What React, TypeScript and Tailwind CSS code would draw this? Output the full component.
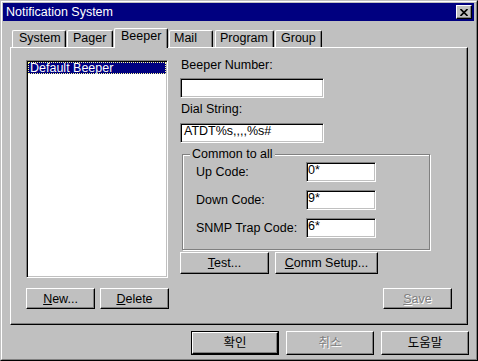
import React from "react";

const raised =
  "border border-t-white border-l-white border-r-black border-b-black shadow-[inset_-1px_-1px_0_#808080]";
const sunken =
  "border border-t-[#808080] border-l-[#808080] border-r-white border-b-white shadow-[inset_1px_1px_0_#000000,inset_-1px_-1px_0_#c0c0c0]";

function Btn({
  w,
  h,
  children,
  disabled,
  def,
}: {
  w: string;
  h: string;
  children: React.ReactNode;
  disabled?: boolean;
  def?: boolean;
}) {
  const inner = (
    <div
      className={`${def ? "w-full h-full" : `${w} ${h}`} ${raised} bg-[#c0c0c0] flex items-center justify-center leading-[14px] ${
        disabled ? "text-[#808080] [text-shadow:1px_1px_0_#ffffff]" : "text-black"
      }`}
    >
      {children}
    </div>
  );
  if (def) {
    return <div className={`${w} ${h} border border-black`}>{inner}</div>;
  }
  return inner;
}

function Tab({
  label,
  cls,
  selected,
}: {
  label: string;
  cls: string;
  selected?: boolean;
}) {
  return (
    <div
      className={`${cls} ${
        selected ? "h-[20px] -mb-px relative z-10" : "h-[17px]"
      } bg-[#c0c0c0] border-t border-l border-r border-t-white border-l-white border-r-black shadow-[inset_-1px_0_0_#808080] rounded-tl-[2px] rounded-tr-[2px] leading-[12px] whitespace-nowrap`}
    >
      {label}
    </div>
  );
}

function Field({ w, text, pl }: { w: string; text?: string; pl: string }) {
  return (
    <div className={`${w} h-[20px] bg-white ${sunken} ${pl} pt-[1px] leading-[12px] whitespace-nowrap`}>
      {text}
    </div>
  );
}

export default function App() {
  return (
    <div className="w-[478px] h-[361px] bg-[#c0c0c0] font-['Liberation_Sans','Noto_Sans_CJK_KR',sans-serif] text-[12.5px] text-black">
      <div className="w-full h-full border border-t-[#c0c0c0] border-l-[#c0c0c0] border-r-black border-b-black">
        <div className="w-full h-full border border-t-white border-l-white border-r-[#808080] border-b-[#808080] pt-px pl-px pr-[2px] flex flex-col">
          {/* Title bar */}
          <div className="h-[18px] bg-[#000080] flex items-center pl-[3px] pr-[2px] shrink-0">
            <span className="flex-1 text-white leading-[14px]">Notification System</span>
            <div className={`w-[16px] h-[14px] ${raised} bg-[#c0c0c0] flex items-center justify-center`}>
              <svg width="8" height="7" viewBox="0 0 8 7" className="block">
                <path d="M0.5 0 L7.5 7 M7.5 0 L0.5 7" stroke="#000" strokeWidth="1.6" fill="none" />
              </svg>
            </div>
          </div>

          {/* Body */}
          <div className="pl-[7px] pr-[6px] pt-[7px] flex flex-col">
            {/* Tabs */}
            <div className="h-[19px] flex items-end pl-[2px]">
              <Tab label="System" cls="w-[54px] pl-[6px] pt-[1px]" />
              <Tab label="Pager" cls="ml-[1px] w-[46px] pl-[5px] pt-[1px]" />
              <Tab label="Beeper" cls="ml-[1px] w-[54px] pl-[6px] pt-[1px]" selected />
              <Tab label="Mail" cls="ml-[1px] w-[44px] pl-[4px] pt-[1px]" />
              <Tab label="Program" cls="ml-[2px] w-[59px] pl-[4px] pt-[1px]" />
              <Tab label="Group" cls="ml-[1px] w-[47px] pl-[5px] pt-[1px]" />
            </div>

            {/* Panel */}
            <div className="h-[278px] border border-t-white border-l-white border-r-black border-b-black shadow-[inset_-1px_-1px_0_#808080] px-[15px] pt-[10px] flex flex-col">
              <div className="flex">
                {/* List */}
                <div className={`mt-[2px] w-[142px] h-[218px] bg-white ${sunken} p-px`}>
                  <div className="h-[12px] bg-[#000080] border border-dotted border-[#ffff99] text-white pl-[1px] leading-[10px] whitespace-nowrap">
                    Default Beeper
                  </div>
                </div>

                {/* Right column */}
                <div className="ml-[12px] flex flex-col">
                  <div className="leading-[14px] pl-px">Beeper Number:</div>
                  <div className="mt-[6px]">
                    <Field w="w-[144px]" pl="pl-[3px]" />
                  </div>
                  <div className="mt-[4px] leading-[14px] pl-px">Dial String:</div>
                  <div className="mt-[7px]">
                    <Field w="w-[144px]" text="ATDT%s,,,,%s#" pl="pl-[3px]" />
                  </div>

                  <div className="relative mt-[11px] ml-[2px] w-[248px] h-[96px] border border-[#808080] shadow-[1px_1px_0_#ffffff,inset_1px_1px_0_#ffffff] pl-[13px] pt-[7px] flex flex-col gap-[8px]">
                    <span className="absolute left-[7px] -top-[8px] px-[2px] bg-[#c0c0c0] leading-[14px]">
                      Common to all
                    </span>
                    <div className="flex items-center">
                      <span className="w-[110px] leading-[14px] whitespace-nowrap">Up Code:</span>
                      <Field w="w-[70px]" text="0*" pl="pl-[1px]" />
                    </div>
                    <div className="flex items-center">
                      <span className="w-[110px] leading-[14px] whitespace-nowrap">Down Code:</span>
                      <Field w="w-[70px]" text="9*" pl="pl-[1px]" />
                    </div>
                    <div className="flex items-center">
                      <span className="w-[110px] leading-[14px] whitespace-nowrap">SNMP Trap Code:</span>
                      <Field w="w-[70px]" text="6*" pl="pl-[1px]" />
                    </div>
                  </div>

                  <div className="mt-[2px] flex gap-[6px]">
                    <Btn w="w-[89px]" h="h-[22px]">
                      <span>
                        <span className="underline">T</span>est...
                      </span>
                    </Btn>
                    <Btn w="w-[103px]" h="h-[22px]">
                      <span>
                        <span className="underline">C</span>omm Setup...
                      </span>
                    </Btn>
                  </div>
                </div>
              </div>

              {/* Bottom row inside panel */}
              <div className="mt-[10px] flex">
                <Btn w="w-[69px]" h="h-[21px]">
                  <span>
                    <span className="underline">N</span>ew...
                  </span>
                </Btn>
                <div className="ml-[5px]">
                  <Btn w="w-[69px]" h="h-[21px]">
                    <span>
                      <span className="underline">D</span>elete
                    </span>
                  </Btn>
                </div>
                <div className="ml-auto">
                  <Btn w="w-[69px]" h="h-[21px]" disabled>
                    <span>
                      <span className="underline">S</span>ave
                    </span>
                  </Btn>
                </div>
              </div>
            </div>

            {/* Dialog buttons */}
            <div className="mt-[6px] flex justify-end gap-[7px] -mr-px">
              <Btn w="w-[88px]" h="h-[24px]" def>
                확인
              </Btn>
              <Btn w="w-[88px]" h="h-[24px]" disabled>
                취소
              </Btn>
              <Btn w="w-[88px]" h="h-[24px]">
                도움말
              </Btn>
            </div>
          </div>
        </div>
      </div>
    </div>
  );
}
